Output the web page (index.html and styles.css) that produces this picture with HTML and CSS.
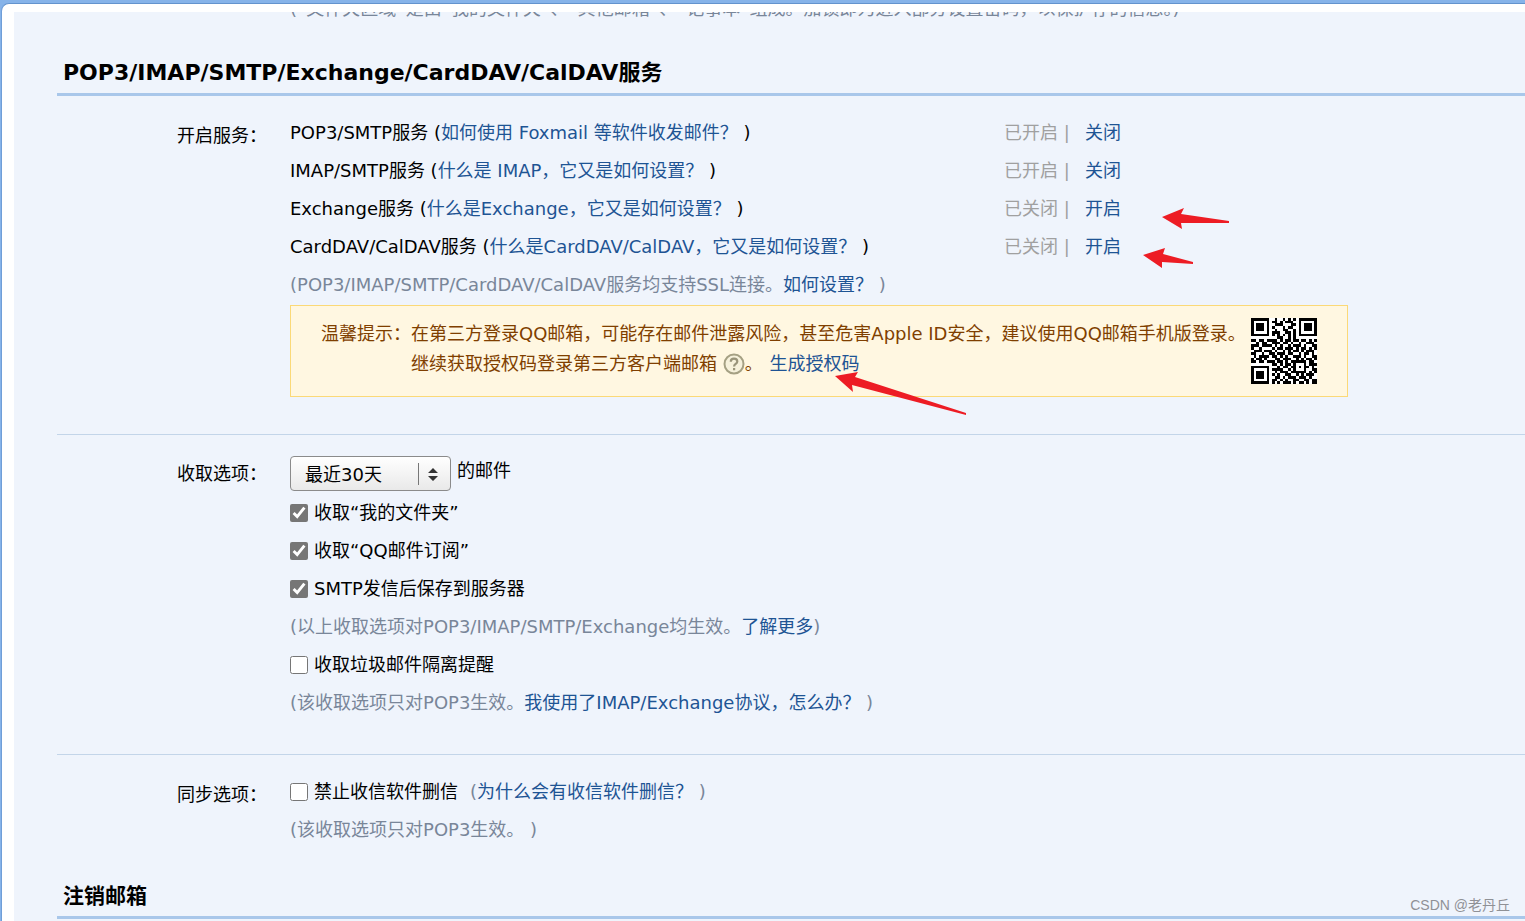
FILE: index.html
```html
<!DOCTYPE html>
<html lang="zh-CN">
<head>
<meta charset="utf-8">
<title>邮箱设置</title>
<link rel="stylesheet" href="styles.css">
</head>
<body>
<div class="frame">
<main class="panel">
  <div class="clip"><p class="clip-text">(“文件夹区域”是由“我的文件夹”、“其他邮箱”、“记事本”组成。加锁即为进入部分设置密码，以保护存的信息。)</p></div>

  <h2 class="title title-wide">POP3/IMAP/SMTP/Exchange/CardDAV/CalDAV服务</h2>
  <section class="group services">
    <div class="label">开启服务：</div>
    <div class="content">
      <div class="row service"><span>POP3/SMTP服务 (<a href="#">如何使用 Foxmail 等软件收发邮件？</a> )</span><span class="status"><span class="state">已开启 |</span><a href="#">关闭</a></span></div>
      <div class="row service"><span>IMAP/SMTP服务 (<a href="#">什么是 IMAP，它又是如何设置？</a> )</span><span class="status"><span class="state">已开启 |</span><a href="#">关闭</a></span></div>
      <div class="row service"><span>Exchange服务 (<a href="#">什么是Exchange，它又是如何设置？</a> )</span><span class="status"><span class="state">已关闭 |</span><a href="#">开启</a></span></div>
      <div class="row service"><span>CardDAV/CalDAV服务 (<a href="#">什么是CardDAV/CalDAV，它又是如何设置？</a> )</span><span class="status"><span class="state">已关闭 |</span><a href="#">开启</a></span></div>
      <div class="row hint">(POP3/IMAP/SMTP/CardDAV/CalDAV服务均支持SSL连接。<a href="#">如何设置？</a>&nbsp;)</div>
      <div class="tip">
        <span class="tip-head">温馨提示：</span>
        <div class="tip-text">在第三方登录QQ邮箱，可能存在邮件泄露风险，甚至危害Apple ID安全，建议使用QQ邮箱手机版登录。<br>继续获取授权码登录第三方客户端邮箱 <svg class="help" viewBox="0 0 22 22" aria-label="帮助"><circle cx="11" cy="11" r="9.5" fill="#f6f1db" stroke="#a5a083" stroke-width="2"/><path d="M7.8 8.8C7.8 6.8 9.1 5.7 11 5.7s3.3 1.1 3.3 2.8c0 2.5-3.2 2.4-3.2 4.9M11.1 15v2.2" fill="none" stroke="#99947a" stroke-width="2.2"/></svg>。 <a href="#">生成授权码</a></div>
        <svg class="qr" id="qr" viewBox="0 0 25 25" shape-rendering="crispEdges" aria-label="二维码"></svg>
      </div>
    </div>
  </section>

  <section class="group receive">
    <label class="label" for="range">收取选项：</label>
    <div class="content">
      <div class="range">
        <span class="picker">
          <select id="range"><option>最近30天</option></select>
          <svg class="picker-mark" viewBox="0 0 20 22" aria-hidden="true"><path d="M.5 0v22" stroke="#777"/><path d="M10 10l5-5 5 5z M10 13l5 5 5-5z" fill="#333"/></svg>
        </span>
        <span class="unit">的邮件</span>
      </div>
      <label class="row"><input type="checkbox" checked>收取“我的文件夹”</label>
      <label class="row"><input type="checkbox" checked>收取“QQ邮件订阅”</label>
      <label class="row"><input type="checkbox" checked>SMTP发信后保存到服务器</label>
      <div class="row hint">(以上收取选项对POP3/IMAP/SMTP/Exchange均生效。<a href="#">了解更多</a>)</div>
      <label class="row"><input type="checkbox">收取垃圾邮件隔离提醒</label>
      <div class="row hint">(该收取选项只对POP3生效。<a href="#">我使用了IMAP/Exchange协议，怎么办？</a>&nbsp;)</div>
    </div>
  </section>

  <section class="group sync">
    <div class="label">同步选项：</div>
    <div class="content">
      <div class="row"><label class="check"><input type="checkbox">禁止收信软件删信</label><span class="hint why">(<a href="#">为什么会有收信软件删信？</a> )</span></div>
      <div class="row hint">(该收取选项只对POP3生效。&nbsp;)</div>
    </div>
  </section>

  <h2 class="title">注销邮箱</h2>
</main>
</div>
<svg class="arrow arrow-exchange" viewBox="0 0 68 22" aria-hidden="true"><path d="M0 9L22 0 19 6 67 13v2L19 15l1 6z"/></svg>
<svg class="arrow arrow-carddav" viewBox="0 0 50 20" aria-hidden="true"><path d="M0 7L22 0l-2 6 30 8v2L19 14v6z"/></svg>
<svg class="arrow arrow-code" viewBox="0 0 132 43" aria-hidden="true"><path d="M0 4L23 0l-3 5 111 36v2L17 13l1 7z"/></svg>
<div class="watermark">CSDN @老丹丘</div>
<script src="qr.js"></script>
</body>
</html>
```

FILE: styles.css
```css
* { box-sizing: border-box; }

body {
  margin: 0;
  min-height: 100vh;
  position: relative;
  overflow: hidden;
  background: #86b3e9;
  color: #000;
  font: 18px/30px "DejaVu Sans", "Noto Sans CJK SC", sans-serif;
}

a { color: #1e5494; text-decoration: none; }
p, h2 { margin: 0; }

.frame {
  height: 100vh;
  margin: 3px 0 0 1px;
  padding: 8px 0 0 12px;
  background: #fff;
  border-top: 1px solid #6393cd;
  border-left: 1px solid #6f9ed8;
  border-top-left-radius: 8px;
}

.panel {
  height: 100%;
  padding-left: 43px;
  overflow: hidden;
  background: #eff4fc;
}

.clip { height: 44px; overflow: hidden; padding-left: 233px; }
.clip-text { margin-top: -18px; line-height: 30px; color: #798699; white-space: nowrap; }

.title {
  height: 40px;
  padding-left: 6px;
  border-bottom: 3px solid #a9c7ea;
  font-size: 21px;
  line-height: 34px;
}
.title-wide { font-size: 22px; }

.group { display: flex; border-bottom: 1px solid #c3d5e9; }
.label { flex: none; width: 233px; padding-left: 120px; }
.content { flex: 1; min-width: 0; white-space: nowrap; }

.services { padding: 18px 0 37px; }
.services .label, .sync .label { padding-top: 7px; }
.receive { padding: 21px 0 32px; }
.receive .label { padding-top: 3px; }
.sync { padding: 18px 0 30px; border-bottom: 0; }

.row { display: flex; align-items: center; height: 38px; }
.service { display: grid; grid-template-columns: 714px auto; }
.status { display: flex; }
.state { width: 81px; color: #a0a0a0; }
.hint { color: #798699; }
.check { display: flex; align-items: center; }
.why { margin-left: 12px; }

input[type="checkbox"] {
  width: 18px;
  height: 18px;
  margin: 0 6px 0 0;
  accent-color: #767676;
}

.tip {
  display: flex;
  width: 1058px;
  margin-top: 1px;
  padding: 12px 30px;
  border: 1px solid #fbd977;
  background: #fff7e1;
  color: #7f3f00;
}
.tip-head { width: 90px; }
.tip-text { width: 840px; }
.tip-head, .tip-text { padding-top: 1px; }
.help { width: 22px; height: 22px; vertical-align: -5px; }
.tip a { margin-left: 1px; }
.qr { flex: none; width: 66px; height: 66px; background: #fff; }

.range { display: flex; gap: 6px; height: 38px; }
.picker { position: relative; width: 161px; height: 35px; }
.picker select {
  width: 100%;
  height: 100%;
  padding: 2px 14px 0;
  appearance: none;
  border: 1px solid #8b8b8b;
  border-radius: 4px;
  background: linear-gradient(#fff, #e9e9e9);
  color: #000;
  font: inherit;
}
.picker-mark { position: absolute; top: 7px; right: 13px; width: 20px; height: 22px; pointer-events: none; }

.arrow { position: absolute; fill: #ed1c24; }
.arrow-exchange { left: 1162px; top: 208px; width: 68px; height: 22px; }
.arrow-carddav { left: 1143px; top: 248px; width: 50px; height: 20px; }
.arrow-code { left: 835px; top: 372px; width: 132px; height: 43px; }

.watermark {
  position: absolute;
  right: 15px;
  bottom: 7px;
  color: #8f9196;
  font: 14px/24px "Liberation Sans", "Noto Sans CJK SC", sans-serif;
}
```

FILE: qr.js
```js
const modules = [
  "1111111001001010101111111",
  "1000001011010111001000001",
  "1011101001110001101011101",
  "1011101010001011001011101",
  "1011101001001100101011101",
  "1000001011100110101000001",
  "1111111010101010101111111",
  "0000000000110010100000000",
  "1101101111010110110110101",
  "0010110011101101001001110",
  "1110111101010010111010011",
  "1001000010110111010110101",
  "0111011101001010110101110",
  "1100100110111011001011010",
  "0101111011010100111010011",
  "1011010001101110010101101",
  "1101101110110101111110110",
  "0000000011010110100010111",
  "1111111000101101101011010",
  "1000001011110010100010011",
  "1011101001011101111110101",
  "1011101010100110010101110",
  "1011101001101011101110100",
  "1000001011010100110011011",
  "1111111010101110101101011"
];

const path = document.createElementNS("http://www.w3.org/2000/svg", "path");
let d = "";
modules.forEach((row, y) => {
  [...row].forEach((cell, x) => {
    if (cell === "1") d += `M${x} ${y}h1v1h-1z`;
  });
});
path.setAttribute("d", d);
document.getElementById("qr").append(path);
```
